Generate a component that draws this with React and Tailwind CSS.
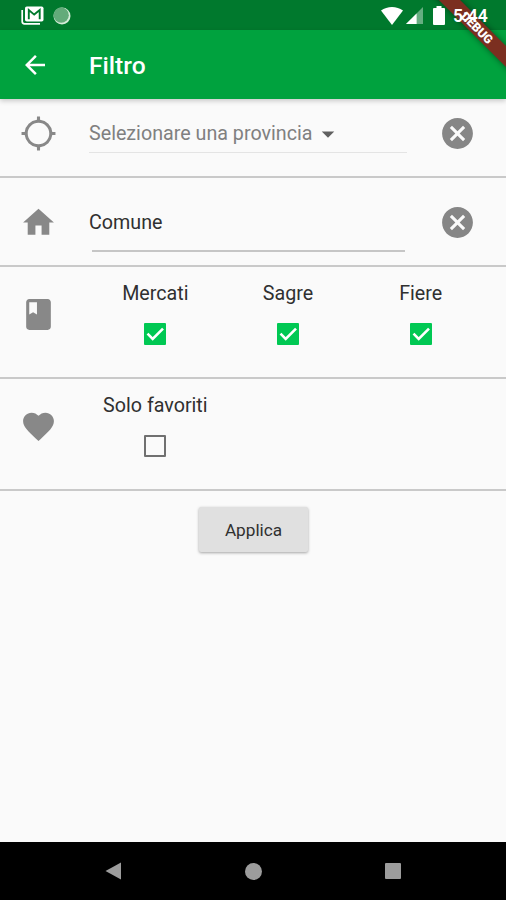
import { useState } from "react";
import {
  MdArrowBack,
  MdArrowDropDown,
  MdBook,
  MdCancel,
  MdFavorite,
  MdGpsNotFixed,
  MdHome,
} from "react-icons/md";

function StatusBar() {
  return (
    <div className="flex h-[30px] shrink-0 items-center bg-[#00792d] pt-px pl-[21px] pr-[18px] text-white">
      <svg width="23" height="19" viewBox="0 0 23 19" fill="none">
        <path d="M1.2 4v11.5a2.3 2.3 0 0 0 2.3 2.3H19" stroke="currentColor" strokeWidth="1.7" />
        <rect x="4" y="0.5" width="18.5" height="15" rx="1.8" fill="currentColor" />
        <path d="M7.8 13.2V4l5.4 4.6L18.7 4v9.2" stroke="#00792d" strokeWidth="1.9" />
      </svg>
      <svg className="ml-[9px]" width="18" height="18" viewBox="0 0 18 18">
        <circle cx="9" cy="9" r="8.5" fill="#d5ecd9" />
        <circle cx="8.2" cy="8.2" r="7.6" fill="#63ab7a" />
      </svg>
      <div className="relative z-30 ml-auto flex items-center">
        <svg width="22" height="18" viewBox="0 0 22 18" fill="currentColor">
          <path d="M0 3.6C6.2-1.2 15.8-1.2 22 3.6L11 18z" />
        </svg>
        <svg className="ml-[3px]" width="17" height="17" viewBox="0 0 17 17" fill="currentColor">
          <path d="M17 0v17H0z" opacity="0.4" />
          <path d="M10.6 6.4V17H0z" />
        </svg>
        <svg className="ml-[10px]" width="12" height="19" viewBox="0 0 12 19" fill="currentColor">
          <path d="M3.5 0h5v2H11a1 1 0 0 1 1 1v15a1 1 0 0 1-1 1H1a1 1 0 0 1-1-1V3a1 1 0 0 1 1-1h2.500z" />
        </svg>
        <span className="ml-[8px] w-[35px] pt-[2px] text-[17.500px] leading-none font-semibold whitespace-nowrap">5:44</span>
      </div>
    </div>
  );
}

function DebugBanner() {
  return (
    <div className="pointer-events-none absolute top-0 right-0 z-20 h-[80px] w-[80px] overflow-hidden">
      <div className="absolute top-[21px] left-[-8px] flex h-[15px] w-[120px] rotate-45 items-center justify-center bg-[#7b2f20] pt-[2px] pr-[2px] text-[12.200px] leading-none font-black text-white shadow-[0_0_6px_rgba(0,0,0,0.45)]">
        DEBUG
      </div>
    </div>
  );
}

function Checkbox({ checked, onChange }) {
  return (
    <button onClick={() => onChange(!checked)} className="block h-[22px] w-[22px]">
      {checked ? (
        <svg width="22" height="22" viewBox="0 0 22 22" fill="none">
          <rect width="22" height="22" rx="1" fill="#00c853" />
          <path d="M3.500 10.700l5.200 5.200L19 5.600" stroke="#fff" strokeWidth="2.600" />
        </svg>
      ) : (
        <span className="block h-full w-full rounded-[1px] border-2 border-[#707070]" />
      )}
    </button>
  );
}

function CheckItem({ label, checked, onChange }) {
  return (
    <div className="flex w-[132.700px] flex-col items-center">
      <span className="mb-[17px] text-[19.700px] leading-[24px] whitespace-nowrap">{label}</span>
      <Checkbox checked={checked} onChange={onChange} />
    </div>
  );
}

function Row({ icon: Icon, className, children }) {
  return (
    <div className={`flex shrink-0 border-b-2 border-[#c9c9c9] ${className}`}>
      <div className="flex w-[89px] shrink-0 items-center pl-5">
        <Icon size={37} className="text-[#888888]" />
      </div>
      {children}
    </div>
  );
}

export default function App() {
  const [filtri, setFiltri] = useState({
    mercati: true,
    sagre: true,
    fiere: true,
    favoriti: false,
  });
  const [comune, setComune] = useState("Comune");

  const cambia = (campo) => (valore) => setFiltri((f) => ({ ...f, [campo]: valore }));

  return (
    <div className="relative flex h-[900px] w-[506px] flex-col overflow-hidden bg-[#fafafa] font-['Roboto',sans-serif] text-[#303030]">
      <StatusBar />
      <header className="z-10 flex h-[69px] shrink-0 items-center bg-[#00a23e] pl-5 text-white shadow-[0_2px_5px_rgba(0,0,0,0.2)]">
        <MdArrowBack size={30} />
        <h1 className="ml-[39px] pt-[3px] text-[24.600px] font-medium">Filtro</h1>
      </header>

      <Row icon={MdGpsNotFixed} className="h-[79px] pb-[9px]">
        <div className="mt-[17px] flex h-[37px] w-[318px] items-center border-b border-[#e4e4e4] text-[#808080]">
          <span className="text-[19.700px] whitespace-nowrap">Selezionare una provincia</span>
          <MdArrowDropDown size={30} className="ml-px text-[#606060]" />
        </div>
        <button className="ml-[32px]">
          <MdCancel size={37} className="text-[#868686]" />
        </button>
      </Row>

      <Row icon={MdHome} className="h-[89px] pt-px">
        <div className="mt-[25px] w-[318px]">
          <input
            value={comune}
            onChange={(e) => setComune(e.target.value)}
            className="block h-[36px] w-full text-[19.700px] outline-none"
          />
          <div className="mt-[10px] ml-[3px] h-[2px] w-[313px] bg-[#c6c6c6]" />
        </div>
        <button className="ml-[32px]">
          <MdCancel size={37} className="text-[#868686]" />
        </button>
      </Row>

      <Row icon={MdBook} className="h-[112px] pb-[16px]">
        <div className="flex pt-[15px]">
          <CheckItem label="Mercati" checked={filtri.mercati} onChange={cambia("mercati")} />
          <CheckItem label="Sagre" checked={filtri.sagre} onChange={cambia("sagre")} />
          <CheckItem label="Fiere" checked={filtri.fiere} onChange={cambia("fiere")} />
        </div>
      </Row>

      <Row icon={MdFavorite} className="h-[112px] pb-[16px]">
        <div className="flex pt-[15px]">
          <CheckItem label="Solo favoriti" checked={filtri.favoriti} onChange={cambia("favoriti")} />
        </div>
      </Row>

      <main className="flex flex-1 justify-center pt-[16px] pl-px">
        <button className="h-[45px] w-[109px] rounded-[2px] bg-[#e0e0e0] pt-[2px] text-[17.200px] shadow-[0_1px_3px_rgba(0,0,0,0.35)]">
          Applica
        </button>
      </main>

      <nav className="flex h-[58px] shrink-0 items-center justify-between bg-black pr-[105px] pl-[105px] text-[#9c9c9c]">
        <svg width="16" height="18" viewBox="0 0 16 18" fill="currentColor">
          <path d="M0.500 9L16 0.500v17z" />
        </svg>
        <span className="h-[17px] w-[17px] rounded-full bg-[#9c9c9c]" />
        <span className="h-[16px] w-[16px] rounded-[1px] bg-[#9c9c9c]" />
      </nav>

      <DebugBanner />
    </div>
  );
}
